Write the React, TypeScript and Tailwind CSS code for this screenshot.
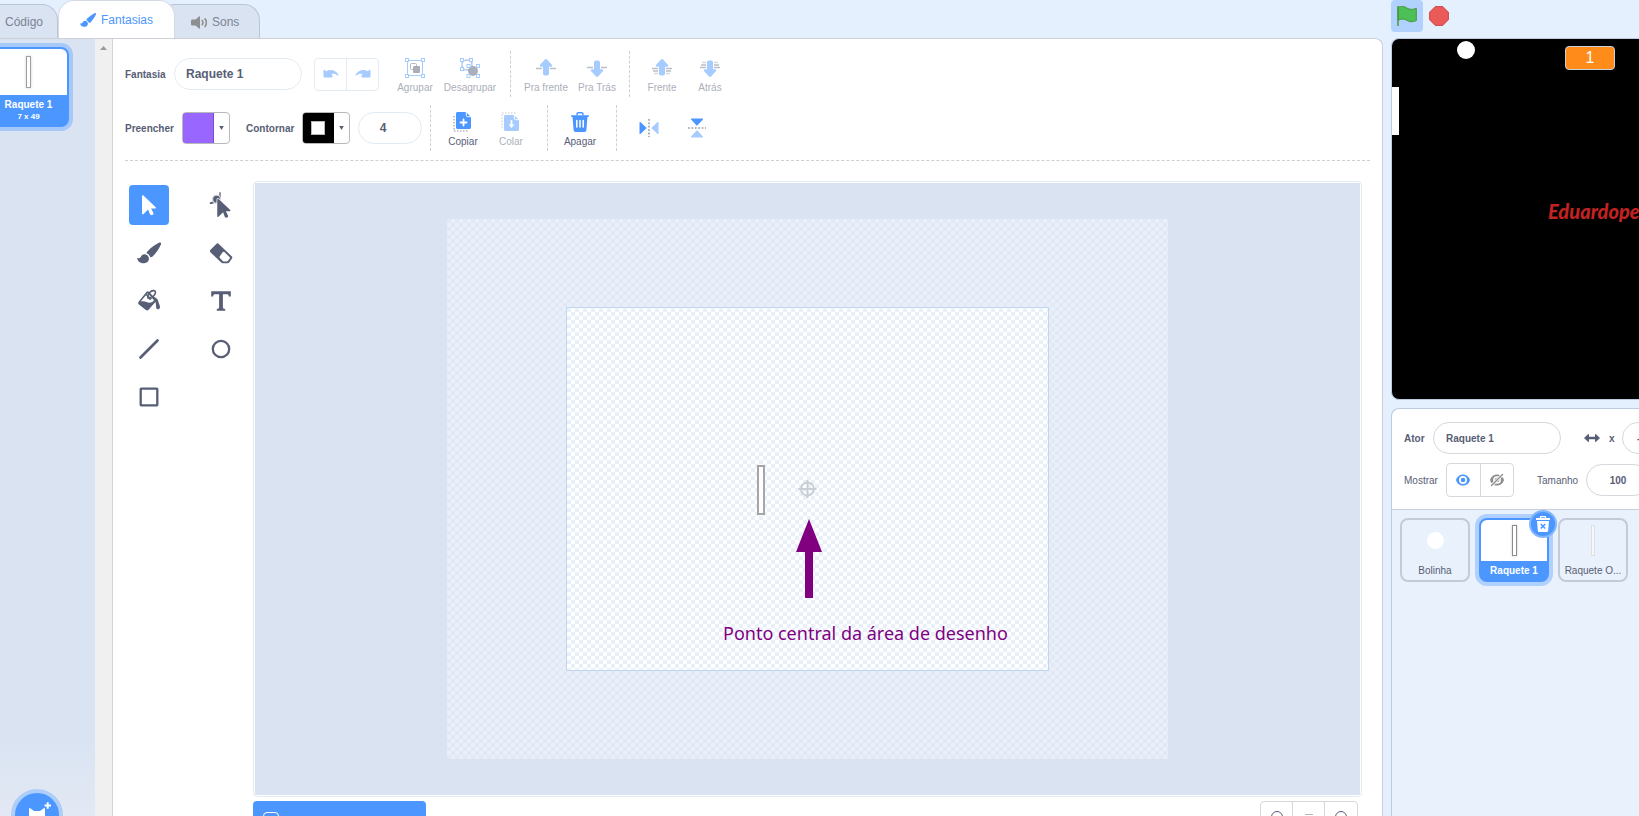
import type { ReactNode } from "react";

const checkerOuter =
  "bg-[conic-gradient(#e9f0f9_25%,#e1e9f5_0_50%,#e9f0f9_0_75%,#e1e9f5_0)] bg-size-[8px_8px]";
const checkerInner =
  "bg-[conic-gradient(#ffffff_25%,#e8f1fa_0_50%,#ffffff_0_75%,#e8f1fa_0)] bg-size-[8px_8px]";

function BrushShape() {
  return (
    <>
      <path d="M23.600 1.600c.7.5.6 1.300.2 2.100-1.700 3.600-4.600 8.400-8.200 11.900-.7.700-1.500.9-2.200.7-.600-1.900-1.900-3.300-3.800-4-.1-.9.400-1.700 1.200-2.400C14.300 6.300 18.700 3.300 21.900 1.800c.6-.3 1.200-.5 1.700-.2z" />
      <path d="M7.600 13.300c2.700.2 4.500 2.300 4.300 4.600-.3 3-3.200 4.400-6 4.300-2.900-.1-5-1.900-5.700-4.500-.1-.5.300-.8.800-.6 1.100.4 2.100.1 2.700-1 .8-1.600 1.900-2.900 3.900-2.800z" />
    </>
  );
}

function Tab({ active, children, label, className }: { active?: boolean; children: ReactNode; label: string; className: string }) {
  return (
    <button
      type="button"
      role="tab"
      aria-selected={!!active}
      className={`flex shrink-0 items-center gap-[5px] rounded-t-2xl border border-b-0 text-xs ${active ? "z-10 h-full border-[#d5dbe6] bg-white text-[#4c97ff]" : "h-[34px] border-[#bcc5d4] bg-[#d9e3f2] text-[#7c8294]"} ${className}`}
    >
      {children}
      <span>{label}</span>
    </button>
  );
}

function ToolButton({ label, disabled, width = "w-12", children }: { label: string; disabled?: boolean; width?: string; children: ReactNode }) {
  return (
    <button
      type="button"
      disabled={disabled}
      className={`flex flex-col items-center gap-1 pt-[3px] text-[10px] leading-3 whitespace-nowrap ${disabled ? "text-[#abafba]" : "text-[#575e75]"} ${width}`}
    >
      <svg className="size-5" viewBox="0 0 20 20" fill="none" aria-hidden="true">
        {children}
      </svg>
      {label}
    </button>
  );
}

function Nodes({ points, size = 3 }: { points: number[][]; size?: number }) {
  return (
    <>
      {points.map(([x, y]) => (
        <rect key={`${x}-${y}`} x={x} y={y} width={size} height={size} fill="#fff" stroke="#a5cbff" />
      ))}
    </>
  );
}

const arrowUp = "M10 1c.4 0 .8.200 1.100.500l4.900 5.500c.6.700.1 1.800-.8 1.800H13v6.700c0 1.100-.9 2-2 2H9c-1.100 0-2-.9-2-2V8.800H4.800c-.9 0-1.400-1.100-.8-1.800L8.900 1.500c.3-.3.700-.5 1.100-.5z";

function ArrowIcon({ down, many }: { down?: boolean; many?: boolean }) {
  return (
    <g transform={down ? "rotate(180 10 10)" : undefined}>
      <path d={arrowUp} fill="#a5cbff" />
      {many ? (
        <g stroke="#bcbfc8" strokeWidth="1.300">
          <path d="M0 10.500h6M14 10.500h6M1 13h5M14 13h5" />
          <path d="M2 15.500h4M14 15.500h4" opacity=".6" />
        </g>
      ) : (
        <path d="M0 10.500h6M14 10.500h6" stroke="#bcbfc8" strokeWidth="1.300" />
      )}
    </g>
  );
}

function Swatch({ label, children, className }: { label: string; children?: ReactNode; className: string }) {
  return (
    <button type="button" aria-label={label} className="flex h-8 w-12 overflow-hidden rounded border border-[#b9b9b9] bg-white">
      <span className={`-m-px flex h-8 w-8 items-center justify-center rounded-l border ${className}`}>{children}</span>
      <span className="flex h-full flex-1 items-center justify-center">
        <svg className="h-1 w-[5px]" viewBox="0 0 5 4" aria-hidden="true">
          <path d="M.2 0h4.600L2.500 4z" fill="#575e75" />
        </svg>
      </span>
    </button>
  );
}

function PaintTool({ label, active, children }: { label: string; active?: boolean; children: ReactNode }) {
  return (
    <button
      type="button"
      aria-label={label}
      aria-pressed={!!active}
      className={`flex size-10 items-center justify-center rounded ${active ? "bg-[#4c97ff] text-white" : "text-[#575e75]"}`}
    >
      <svg className="size-7" viewBox="-2 -2 28 28" fill="currentColor" aria-hidden="true">
        {children}
      </svg>
    </button>
  );
}

const cursor = "M5 3.200c0-.8.800-1.100 1.400-.6l12.300 11.600c.5.500.2 1.300-.5 1.300h-4.100l2.200 4.300c.5 1-.1 2-1 2.300-1 .4-2-.1-2.400-1l-1.800-4.500-4.800 4.600c-.5.400-1.300.2-1.300-.6z";
const undo = "M.5 4.200c0-.5.500-.700.900-.4l1.800 1.400C6.900 2.900 12.800 3.600 15.500 8.800c.3.600-.4 1-.9.600-2.300-1.800-4.500-2-6.300-1.200l1 1c.6.600.3 2.300-.6 2.300H2c-.8 0-1.500-.5-1.500-1.300z";

function Toolbar() {
  const pill = "h-8 rounded-full border border-[#e3ebf2] bg-white font-bold text-[#575e75] outline-none";
  return (
    <div className="mr-3 ml-3 border-b border-dashed border-[#cfcfcf] pt-3 pb-[9px]">
      <div className="flex h-[46px] items-center">
        <label htmlFor="costume" className="w-[49px] text-[10px] font-bold">Fantasia</label>
        <input id="costume" defaultValue="Raquete 1" className={`${pill} w-32 px-[11px] text-xs`} />
        <div className="ml-3 flex h-[33px] w-[65px] rounded border border-[#e3ebf2]">
          <button type="button" aria-label="Desfazer" className="flex flex-1 items-center justify-center border-r border-[#e3ebf2]">
            <svg className="size-4" viewBox="0 0 16 16" fill="#a5cbff"><path d={undo} /></svg>
          </button>
          <button type="button" aria-label="Refazer" className="flex flex-1 items-center justify-center">
            <svg className="size-4 -scale-x-100" viewBox="0 0 16 16" fill="#a5cbff"><path d={undo} /></svg>
          </button>
        </div>
        <div className="flex h-full items-center border-r border-dashed border-[#cfcfcf] pr-[9px] pl-3">
          <ToolButton label="Agrupar" disabled>
            <rect x="2.500" y="2.500" width="15" height="15" stroke="#a5cbff" />
            <rect x="5.500" y="5.500" width="6" height="6" rx="1" stroke="#b4b8c4" />
            <rect x="8" y="8" width="7" height="7" rx="1" fill="#a9aebb" />
            <Nodes points={[[0.5, 0.5], [16.5, 0.5], [0.5, 16.5], [16.5, 16.5]]} />
          </ToolButton>
          <ToolButton label="Desagrupar" disabled width="w-[62px]">
            <circle cx="7" cy="7" r="5" stroke="#b4b8c4" />
            <path d="M2 2h10v10H2z" stroke="#a5cbff" strokeDasharray="2 1" />
            <circle cx="13" cy="13" r="5" fill="#a9aebb" />
            <Nodes points={[[0.5, 0.5], [9.5, 0.5], [0.5, 9.5], [7, 6.5], [16.5, 6.5], [7, 16.5], [16.5, 16.5]]} />
          </ToolButton>
        </div>
        <div className="flex h-full items-center border-r border-dashed border-[#cfcfcf] pr-[7px] pl-[9px]">
          <ToolButton label="Pra frente" disabled width="w-[52px]"><ArrowIcon /></ToolButton>
          <ToolButton label="Pra Trás" disabled width="w-[50px]"><ArrowIcon down /></ToolButton>
        </div>
        <div className="flex h-full items-center pl-2">
          <ToolButton label="Frente" disabled><ArrowIcon many /></ToolButton>
          <ToolButton label="Atrás" disabled><ArrowIcon down many /></ToolButton>
        </div>
      </div>

      <div className="mt-2 flex h-[46px] items-center">
        <span className="w-[57px] text-[10px] font-bold">Preencher</span>
        <Swatch label="Preencher" className="border-[#7a4fcc] bg-[#9966ff]" />
        <span className="ml-4 w-14 text-[10px] font-bold">Contornar</span>
        <Swatch label="Contornar" className="border-black bg-black">
          <span className="size-3.5 border border-[#b9b9b9] bg-white" />
        </Swatch>
        <input aria-label="Espessura do contorno" defaultValue="4" className={`${pill} mx-2 w-16 pr-3.5 text-center text-xs`} />
        <div className="flex h-full items-center border-x border-dashed border-[#cfcfcf] pr-3 pl-2">
          <ToolButton label="Copiar">
            <path d="M1 4v15h15" stroke="#b0b4bf" strokeWidth="1.500" strokeDasharray="1.500 1.500" />
            <path d="M4.500 0h8.500l5 5v10.500c0 .8-.7 1.500-1.500 1.500h-12C3.700 17 3 16.300 3 15.500v-14C3 .7 3.700 0 4.500 0z" fill="#4c97ff" />
            <path d="M13.300 0v3.500c0 .7.500 1.200 1.200 1.200H18" stroke="#fff" />
            <path d="M10.500 7.500v6M7.500 10.500h6" stroke="#fff" strokeWidth="1.800" strokeLinecap="round" />
          </ToolButton>
          <ToolButton label="Colar" disabled>
            <path d="M1 16V1h15" stroke="#d7d9df" strokeWidth="1.500" strokeDasharray="1.500 1.500" />
            <path d="M4.500 3H13l5 5v9.500c0 .8-.7 1.500-1.500 1.500h-12C3.700 19 3 18.300 3 17.500v-13C3 3.700 3.700 3 4.500 3z" fill="#a5cbff" />
            <path d="M13.300 3v3.500c0 .7.500 1.200 1.200 1.200H18" stroke="#fff" />
            <path d="M10.500 9v4" stroke="#fff" strokeWidth="1.800" strokeLinecap="round" />
            <path d="M7.500 12.500h6l-3 3.500z" fill="#fff" />
          </ToolButton>
        </div>
        <div className="flex h-full items-center border-r border-dashed border-[#cfcfcf] pr-3 pl-2">
          <ToolButton label="Apagar">
            <path d="M7 3.500V2c0-.800.600-1.300 1.300-1.300h3.400c.7 0 1.300.500 1.300 1.300v1.500" stroke="#4c97ff" strokeWidth="1.400" />
            <path d="M2 3.200h16c.6 0 1 .4 1 .9s-.4 1-1 1h-.5L16.400 18c-.1 1.100-.9 2-2 2H5.600c-1.100 0-1.900-.9-2-2L2.500 5.100H2c-.6 0-1-.500-1-1s.4-.9 1-.9z" fill="#4c97ff" />
            <path d="M6.800 8.500v6.500M10 8.500v6.500M13.200 8.500v6.500" stroke="#fff" strokeWidth="1.500" strokeLinecap="round" />
          </ToolButton>
        </div>
        <div className="flex pl-2">
          <button type="button" aria-label="Inverter horizontalmente" className="flex w-12 justify-center">
            <svg className="size-5" viewBox="0 0 20 20">
              <path d="M.5 4.500v11c0 .5.500.7.900.400L7.200 10.600c.4-.4.400-.8 0-1.200L1.400 4.100c-.4-.3-.9-.1-.9.400z" fill="#4c97ff" />
              <path d="M19.500 4.500v11c0 .5-.5.7-.9.400l-5.800-5.300c-.4-.4-.4-.8 0-1.200l5.800-5.300c.4-.3.900-.1.900.4z" fill="#a5cbff" />
              <path d="M10 1v18" stroke="#9a9fac" strokeWidth="1.600" strokeDasharray="1.800 1.600" />
            </svg>
          </button>
          <button type="button" aria-label="Inverter verticalmente" className="flex w-12 justify-center">
            <svg className="size-5" viewBox="0 0 20 20">
              <path d="M4.500.5h11c.5 0 .7.500.400.9L10.600 7.200c-.4.400-.8.400-1.200 0L4.100 1.400c-.3-.4-.1-.9.400-.9z" fill="#4c97ff" />
              <path d="M4.500 19.500h11c.5 0 .7-.5.400-.9l-5.300-5.800c-.4-.4-.8-.4-1.200 0l-5.300 5.800c-.3.400-.1.900.4.900z" fill="#a5cbff" />
              <path d="M1 10h18" stroke="#9a9fac" strokeWidth="1.600" strokeDasharray="1.800 1.600" />
            </svg>
          </button>
        </div>
      </div>
    </div>
  );
}

function PaintTools() {
  return (
    <div className="grid grid-cols-[40px_40px] content-start gap-x-8 gap-y-2 pt-1">
      <PaintTool label="Selecionar" active>
        <path d={cursor} />
      </PaintTool>
      <PaintTool label="Remodelar">
        <path d="M1 10.300c2.800.6 4.500-.4 5.900-2.500C8 6 9.200 4.700 11 4" fill="none" stroke="currentColor" strokeWidth="1.300" />
        <path d="M11-.8v5.300M.8 10.400l3-1.200" fill="none" stroke="currentColor" strokeWidth="1.300" />
        <circle cx="7.600" cy="6.200" r="4" stroke="#d8dae0" strokeWidth="1.200" />
        <path d={cursor} transform="translate(3.500 3.600) scale(.95)" stroke="#fff" strokeWidth="1.500" paintOrder="stroke" />
      </PaintTool>
      <PaintTool label="Pincel">
        <BrushShape />
      </PaintTool>
      <PaintTool label="Borracha">
        <path d="M9.500 2.700 22.700 15.300c.7.700.8 1.400.3 2.200l-2.700 3.800c-.4.600-1 .9-1.700.9h-4.700c-.7 0-1.200-.2-1.700-.7L1.400 11.200c-.7-.7-.7-1.400-.1-2.100l6.300-6.300c.6-.7 1.200-.7 1.900-.1z" />
        <path d="M13.600 11.200c.6-.7 1.200-.7 1.800-.1l5.200 5c.5.500.5.900.1 1.400l-1.700 2.300c-.3.400-.6.600-1.100.6h-3c-.5 0-.8-.1-1.100-.5l-2.900-3c-.5-.5-.5-1-.1-1.600z" fill="#fff" />
      </PaintTool>
      <PaintTool label="Preencher forma">
        <path d="M9.400 3c.8-1 1.800-1 2.700-.1l6.700 7c.8.9.8 1.700 0 2.600l-7.200 8.200c-.8.900-1.700 1-2.700.3l-7-5.500c-.9-.8-1-1.700-.3-2.700z" />
        <path d="M10.700 4.200 3.600 12.500c2.400-.5 4.200-.2 5.800.6 2.300 1.100 4.500 1 6.300-.4l1.300-1.500z" fill="#fff" />
        <path d="M11.500 9.500c-1.500-.9-.6-4 1.500-6.200 1.900-2 4.500-2.100 5.200-.9.800 1.500-.8 4-3.500 6.300" fill="none" stroke="currentColor" strokeWidth="1.600" />
        <path d="m9 5.200 5 5" fill="none" stroke="currentColor" strokeWidth="1.400" />
        <circle cx="13" cy="9.300" r="1.500" />
        <path d="M15.500 7.800c3.700.5 5.400 2.200 5.900 5 .3 1.700 1.500 3.500 1.600 5.300 0 1.300-.8 2.200-1.900 2.200s-2-.9-2-2.300c-.1-2.500.1-5.300-3.600-10.200z" />
      </PaintTool>
      <PaintTool label="Texto">
        <path d="M2.200 2.200h19.600v5.300h-1.900c-.2-1.600-.7-2.200-2.300-2.200h-3.700v12.900c0 1.300.6 1.600 2.300 1.700v1.800H7.800v-1.800c1.700-.1 2.300-.4 2.300-1.700V5.300H6.400C4.800 5.300 4.300 5.900 4.100 7.500H2.200z" />
      </PaintTool>
      <PaintTool label="Linha">
        <path d="M3.500 20.500 20.500 3.500" stroke="currentColor" strokeWidth="2.700" strokeLinecap="round" />
      </PaintTool>
      <PaintTool label="Círculo">
        <circle cx="12" cy="12" r="8.200" fill="none" stroke="currentColor" strokeWidth="2.300" />
      </PaintTool>
      <PaintTool label="Retângulo">
        <rect x="3.700" y="3.700" width="16.600" height="16.600" rx=".5" fill="none" stroke="currentColor" strokeWidth="2.300" />
      </PaintTool>
    </div>
  );
}

function Canvas() {
  return (
    <div className="min-h-0 flex-1 rounded border border-[#e3ebf2] bg-white p-px">
      <div className="flex h-full items-center justify-center overflow-hidden bg-[#d9e3f2]">
        <div className={`flex h-[540px] w-[721px] shrink-0 items-center justify-center ${checkerOuter}`}>
          <div className={`relative h-[364px] w-[483px] border border-[#c2d6f0] ${checkerInner}`}>
            <svg className="absolute inset-0 size-full" viewBox="0 0 481 362" aria-hidden="true">
              <rect x="191" y="158" width="6" height="48" fill="#fff" stroke="#a6a6a6" strokeWidth="2" />
              <g fill="none" stroke="#c9cdd4" strokeWidth="2">
                <circle cx="240.500" cy="181" r="6.500" />
                <path d="M240.500 172v18M231.500 181h18" />
              </g>
              <path d="M242 211l13 33h-9v46h-8v-46h-9z" fill="#800080" />
            </svg>
            <p className="absolute top-[313px] left-[156px] font-['Noto_Sans',sans-serif] text-[18px] leading-6 whitespace-nowrap text-[#800080]">
              Ponto central da área de desenho
            </p>
          </div>
        </div>
      </div>
    </div>
  );
}

function SpriteCard({ label, selected, children }: { label: string; selected?: boolean; children: ReactNode }) {
  return (
    <div
      className={`relative flex h-16 w-[70px] shrink-0 flex-col rounded-lg border-2 text-[10px] ${selected ? "border-[#4c97ff] bg-[#4c97ff] font-bold text-white ring-4 ring-[#b0d1ff]" : "border-[#c3cad8] text-[#575e75]"}`}
    >
      <div className={`flex h-[41px] items-center justify-center rounded-t-md ${selected ? "bg-white" : ""}`}>{children}</div>
      <span className="flex flex-1 items-center justify-center whitespace-nowrap">{label}</span>
      {selected && (
        <button type="button" aria-label="Apagar ator" className="absolute -top-2.5 -right-2.5 flex size-7 items-center justify-center rounded-full border-2 border-[#83b6fb] bg-[#4c97ff]">
          <svg className="h-4 w-3.5" viewBox="0 0 14 16" fill="none">
            <path d="M4.500 2V.700h5V2" stroke="#fff" strokeWidth="1.200" />
            <path d="M0 2h14v2H0zM1 5h12l-.8 9.500c-.1.900-.6 1.500-1.500 1.500H3.300c-.9 0-1.400-.6-1.500-1.500z" fill="#fff" />
            <path d="m4.800 8 4.400 4.600M9.200 8l-4.400 4.600" stroke="#4c97ff" strokeWidth="1.500" />
          </svg>
        </button>
      )}
    </div>
  );
}

function StageColumn() {
  const pill = "h-8 shrink-0 rounded-full border border-[#d5d8dd] bg-white text-[10px] font-bold text-[#575e75] outline-none";
  return (
    <aside className="flex w-[248px] shrink-0 flex-col overflow-hidden">
      <div className="flex h-[38px] items-start">
        <button type="button" aria-label="Iniciar" className="flex size-8 items-center justify-center rounded bg-[#b1d1ff]">
          <svg className="size-5" viewBox="0 0 20 20">
            <path d="M1 1.500c3.500-2 6.500-1 9 .6 2.500 1.500 5.500 1.800 9.300.3v12.200c-3.800 1.700-7 1.300-9.500-.3-2.500-1.500-5.500-1.700-8.800 0z" fill="#4cbf56" stroke="#45993d" strokeWidth="1" />
            <path d="M1 .5v19" stroke="#45993d" strokeWidth="1.500" strokeLinecap="round" />
          </svg>
        </button>
        <button type="button" aria-label="Parar" className="flex size-8 items-center justify-center rounded">
          <svg className="size-5" viewBox="0 0 20 20">
            <path d="M6.200.6h7.600l5.600 5.600v7.600l-5.600 5.600H6.200L.6 13.800V6.200z" fill="#ec5959" stroke="#c94a4a" />
          </svg>
        </button>
      </div>

      <div className="relative h-[362px] overflow-hidden rounded-l-lg border border-r-0 border-[#bccbde] bg-black">
        <span className="absolute top-0.5 left-[65px] size-[18px] rounded-full bg-white" />
        <span className="absolute top-12 left-0 h-12 w-[7px] bg-white" />
        <span className="absolute top-[7px] left-[173px] flex h-6 w-[50px] items-center justify-center rounded border border-[#c8d0dc] bg-[#ff8c1a] text-base text-white">1</span>
        <span className="absolute top-[158px] left-[156px] font-['Lato',sans-serif] text-[20px] leading-7 font-black text-[#c12222] italic">Eduardope</span>
      </div>

      <div className="mt-2 flex flex-1 flex-col rounded-tl-lg border border-r-0 border-b-0 border-[#bccbde] bg-[#e9f1fc]">
        <div className="flex flex-col gap-[9px] rounded-tl-lg border-b border-[#c9cedb] bg-white pt-[13px] pb-3 pl-3">
          <div className="flex items-center whitespace-nowrap">
            <label htmlFor="sprite" className="w-[29px] shrink-0 text-[10px] font-bold">Ator</label>
            <input id="sprite" defaultValue="Raquete 1" className={`${pill} w-32 px-3`} />
            <svg className="ml-[23px] h-2 w-4 shrink-0" viewBox="0 0 16 8" fill="#575e75" aria-hidden="true">
              <path d="M0 4 4 .3c.5-.4 1-.1 1 .4v2.100h6V.7c0-.5.500-.8 1-.4L16 4l-4 3.700c-.5.400-1 .1-1-.4V5.200H5v2.100c0 .5-.5.800-1 .4z" />
            </svg>
            <label htmlFor="posx" className="ml-[9px] w-[13px] shrink-0 text-[10px] font-bold">x</label>
            <input id="posx" defaultValue="-178" className={`${pill} w-16 px-3.5`} />
          </div>
          <div className="flex items-center whitespace-nowrap text-[10px]">
            <span className="w-[42px] shrink-0">Mostrar</span>
            <div className="flex h-[34px] w-[68px] shrink-0 rounded border border-[#d5d8dd]">
              <button type="button" aria-label="Mostrar ator" className="flex flex-1 items-center justify-center border-r border-[#d5d8dd]">
                <svg className="size-3.5" viewBox="0 0 14 14">
                  <path d="M7 1.500c3.200 0 5.800 2.400 6.700 4.600.3.600.3 1.200 0 1.800-.9 2.200-3.500 4.600-6.700 4.600S1.200 10.100.3 7.900c-.3-.6-.3-1.200 0-1.800C1.200 3.900 3.800 1.500 7 1.500z" fill="#4c97ff" />
                  <circle cx="7" cy="7" r="3.100" fill="#4c97ff" stroke="#fff" strokeWidth="1.700" />
                </svg>
              </button>
              <button type="button" aria-label="Esconder ator" className="flex flex-1 items-center justify-center">
                <svg className="size-3.5" viewBox="0 0 14 14">
                  <path d="M7 1.500c3.200 0 5.800 2.400 6.700 4.600.3.600.3 1.200 0 1.800-.9 2.200-3.500 4.600-6.700 4.600S1.200 10.100.3 7.900c-.3-.6-.3-1.200 0-1.800C1.200 3.900 3.800 1.500 7 1.500z" fill="#8f8f8f" />
                  <circle cx="7" cy="7" r="3.100" fill="#8f8f8f" stroke="#fff" strokeWidth="1.500" />
                  <path d="M1.500 12.500 12.500 1.500" stroke="#fff" strokeWidth="3" />
                  <path d="M1.500 12.500 12.500 1.500" stroke="#8f8f8f" strokeWidth="1.400" strokeLinecap="round" />
                </svg>
              </button>
            </div>
            <label htmlFor="size" className="ml-[23px] w-[49px] shrink-0">Tamanho</label>
            <input id="size" defaultValue="100" className={`${pill} w-16 text-center`} />
          </div>
        </div>
        <div className="flex gap-[9px] pt-2 pl-2">
          <SpriteCard label="Bolinha"><span className="size-[17px] rounded-full bg-white" /></SpriteCard>
          <SpriteCard label="Raquete 1" selected><span className="h-[31px] w-[5px] border border-[#8c8c8c] bg-white shadow-[0_0_3px_#00000033]" /></SpriteCard>
          <SpriteCard label="Raquete O..."><span className="h-[31px] w-1 border border-[#dcdfe4] bg-[#f7f7f5]" /></SpriteCard>
        </div>
      </div>
    </aside>
  );
}

export default function App() {
  return (
    <div className="flex h-screen gap-2 overflow-hidden bg-[#e5f0ff] font-['Liberation_Sans',Arial,sans-serif] text-[#575e75]">
      <div className="flex min-w-0 flex-1 flex-col">
        <div role="tablist" className="flex h-[38px] shrink-0 items-end">
          <Tab label="Código" className="-ml-4 w-[74px] pl-[5px]">
            <svg className="h-3 w-2.5 shrink-0" viewBox="0 0 10 12" aria-hidden="true"><path d="M6 0h1.500C9 0 10 1 10 2.500S9 5 7.500 5H6z" fill="#8f8f8f" /></svg>
          </Tab>
          <Tab label="Fantasias" active className="w-[117px] justify-center">
            <svg className="size-4" viewBox="0 0 24 24" fill="currentColor" aria-hidden="true"><BrushShape /></svg>
          </Tab>
          <Tab label="Sons" className="-ml-4 w-[101px] pl-[31px]">
            <svg className="size-4 shrink-0" viewBox="0 0 16 16" fill="#8f8f8f" aria-hidden="true">
              <path d="M8 2.500c.5-.400 1-.1 1 .5v11c0 .6-.5.900-1 .5L4.500 11.500h-3c-.8 0-1.500-.5-1.500-1.300V6.800C0 6 .7 5.500 1.500 5.500h3z" />
              <path d="M11.200 6.500c.8 1.200.8 3 0 4.200M14 4.800c1.700 2.300 1.700 5.300 0 7.600" fill="none" stroke="#8f8f8f" strokeWidth="1.600" strokeLinecap="round" />
            </svg>
          </Tab>
        </div>

        <div className="flex min-h-0 flex-1 overflow-hidden rounded-tr-lg border-t border-r border-[#cdd0d6] bg-white">
          <div className="relative w-[95px] shrink-0 overflow-hidden bg-[#d9e3f2] pt-2">
            <div className="-ml-3 flex h-20 w-[81px] flex-col items-center overflow-hidden rounded-lg border-2 border-[#4c97ff] bg-[#4c97ff] text-white ring-4 ring-[#a6c9f9]">
              <div className="flex h-[46px] w-full shrink-0 items-center justify-center bg-white">
                <span className="h-8 w-[5px] border border-[#a0a0a0] bg-white shadow-[0_0_3px_#00000033]" />
              </div>
              <span className="mt-1 text-[10px] leading-3 font-bold">Raquete 1</span>
              <span className="text-[8px] leading-[11px] font-bold">7 x 49</span>
            </div>
            <div className="absolute inset-x-0 bottom-0 h-20 bg-linear-to-b from-[#d9e3f2] to-[#e3e9f4]" />
            <button type="button" aria-label="Escolher fantasia" className="absolute -bottom-[25px] left-[11px] flex size-[52px] justify-center rounded-full border-4 border-[#aecdf8] bg-[#4c97ff]">
              <svg className="mt-2 h-6 w-7" viewBox="0 0 28 24" fill="#fff" aria-hidden="true">
                <path d="M6 8c0-1 .8-1.200 1.500-.6L11 10h6l3.500-2.600c.7-.6 1.500-.4 1.500.6v16H6z" />
                <path d="M23.700 1.300h2v2.200H28v2h-2.300v2.200h-2V5.500h-2.200v-2h2.200z" />
              </svg>
            </button>
          </div>
          <div className="flex w-[17px] shrink-0 justify-center bg-[#f0f0f0] pt-[7px]">
            <svg className="h-1 w-[7px]" viewBox="0 0 7 4" aria-hidden="true"><path d="M0 4h7L3.500 0z" fill="#9b9b9b" /></svg>
          </div>

          <main className="flex min-w-0 flex-1 flex-col border-l border-[#d5d5d5]">
            <Toolbar />
            <div className="mt-5 flex min-h-0 flex-1 gap-3 pr-5 pl-4">
              <PaintTools />
              <div className="flex min-w-0 flex-1 flex-col">
                <Canvas />
                <div className="mt-1 flex h-[15px] shrink-0 items-start justify-between overflow-hidden">
                  <button type="button" aria-label="Converter para bitmap" className="flex h-9 w-[173px] shrink-0 items-start rounded bg-[#4c97ff] pt-[11px] pl-2.5">
                    <span className="size-4 rounded border border-white" />
                  </button>
                  <div className="mr-1 flex h-8 shrink-0 rounded border border-[#d5d8dd]">
                    <button type="button" aria-label="Reduzir" className="flex w-8 items-start justify-center border-r border-[#d5d8dd] pt-[9px]"><span className="size-3 rounded-full border border-[#575e75]" /></button>
                    <button type="button" aria-label="Zoom normal" className="flex w-8 items-start justify-center border-r border-[#d5d8dd] pt-3"><span className="h-2 w-2 border-t border-[#b3b7c0]" /></button>
                    <button type="button" aria-label="Ampliar" className="flex w-8 items-start justify-center pt-[9px]"><span className="size-3 rounded-full border border-[#575e75]" /></button>
                  </div>
                </div>
              </div>
            </div>
          </main>
        </div>
      </div>
      <StageColumn />
    </div>
  );
}
